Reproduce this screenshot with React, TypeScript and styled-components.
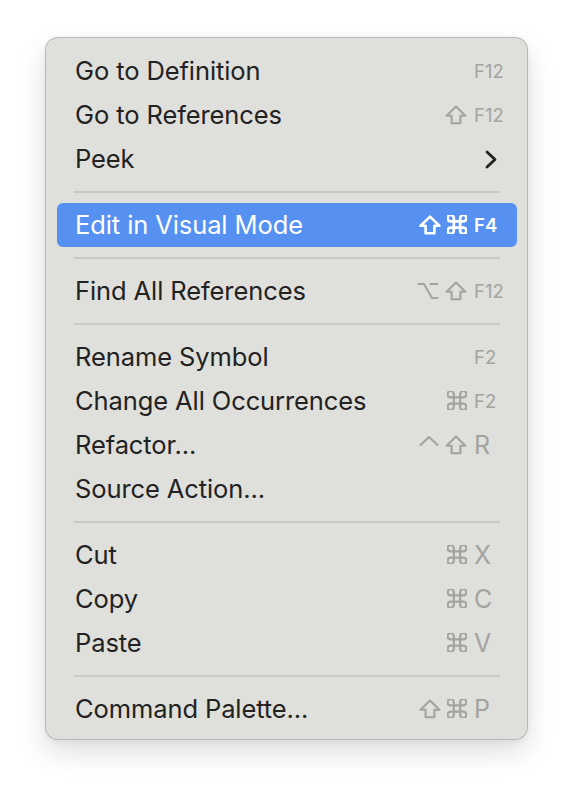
import React from "react";
import styled, { createGlobalStyle } from "styled-components";

const Global = createGlobalStyle`
  html, body { margin: 0; padding: 0; background: #ffffff; }
  body { font-family: Inter, "Noto Sans", "Liberation Sans", sans-serif; }
`;

const Page = styled.div`
  box-sizing: border-box;
  min-height: 794px;
  padding: 37px 0 0 45px;
`;

const Menu = styled.div`
  box-sizing: border-box;
  width: 483px;
  padding: 11px 10px 8px 11px;
  background: #dfdfdb;
  border: 1px solid rgba(0, 0, 0, 0.17);
  border-radius: 13px;
  box-shadow: 0 12px 28px rgba(0, 0, 0, 0.13), 0 2px 6px rgba(0, 0, 0, 0.06);
  display: flex;
  flex-direction: column;
`;

const Item = styled.div<{ $active?: boolean }>`
  height: 44px;
  display: flex;
  align-items: center;
  padding: 0 9px 0 18px;
  border-radius: 6px;
  background: ${(p) => (p.$active ? "#5691f2" : "transparent")};
  color: ${(p) => (p.$active ? "#ffffff" : "#222222")};
`;

const Label = styled.span`
  flex: 1;
  font-size: 25.5px;
  letter-spacing: -0.1px;
  line-height: 1;
`;

const Mods = styled.span<{ $active?: boolean }>`
  display: flex;
  align-items: center;
  gap: 6px;
  margin-right: 7px;
  color: ${(p) => (p.$active ? "#ffffff" : "#a3a3a0")};
`;

const Key = styled.span<{ $fn?: boolean; $active?: boolean }>`
  width: 34px;
  font-size: ${(p) => (p.$fn ? "18.5px" : "25px")};
  font-weight: ${(p) => (p.$active ? 600 : 400)};
  color: ${(p) => (p.$active ? "#ffffff" : "#a3a3a0")};
  line-height: 1;
`;

const Arrow = styled.span`
  width: 34px;
  display: flex;
  justify-content: flex-end;
  padding-right: 11px;
  box-sizing: border-box;
  color: #222222;
`;

const Separator = styled.div`
  height: 22px;
  display: flex;
  align-items: center;
  padding: 0 17px;
  &::after {
    content: "";
    flex: 1;
    height: 2px;
    background: #c9c9c5;
  }
`;

type Mod = "shift" | "cmd" | "opt" | "ctrl";

const ModIcon: React.FC<{ kind: Mod; bold?: boolean }> = ({ kind, bold }) => {
  const sw = bold ? 2.6 : 2.1;
  if (kind === "shift")
    return (
      <svg width="22" height="20" viewBox="0 0 22 20" fill="none" stroke="currentColor" strokeWidth={sw} strokeLinejoin="round">
        <path d="M11 1.6 L1.6 10.8 H6.6 V18.2 H15.4 V10.8 H20.4 Z" />
      </svg>
    );
  if (kind === "cmd")
    return (
      <svg width="20" height="19" viewBox="3 3 18 18" fill="none" stroke="currentColor" strokeWidth={sw} strokeLinecap="round" strokeLinejoin="round" style={{ marginTop: "-1px" }}>
        <path d="M15 6v12a3 3 0 1 0 3-3H6a3 3 0 1 0 3 3V6a3 3 0 1 0-3 3h12a3 3 0 1 0-3-3" />
      </svg>
    );
  if (kind === "opt")
    return (
      <svg width="22" height="18" viewBox="0 0 22 18" fill="none" stroke="currentColor" strokeWidth={sw} strokeLinejoin="round">
        <path d="M0.8 2 H7 L15 16 H21.2 M12.6 2 H21.2" />
      </svg>
    );
  return (
    <svg width="20" height="20" viewBox="0 0 20 20" fill="none" stroke="currentColor" strokeWidth={sw} strokeLinejoin="round" strokeLinecap="round">
      <path d="M1.5 10 L10 2 L18.5 10" />
    </svg>
  );
};

const Chevron = () => (
  <svg width="12" height="19" viewBox="0 0 12 19" fill="none" stroke="currentColor" strokeWidth="2.8" strokeLinecap="round" strokeLinejoin="round">
    <path d="M2 2 L10 9.5 L2 17" />
  </svg>
);

type Entry =
  | { sep: true }
  | { sep?: false; label: string; mods?: Mod[]; key?: string; fn?: boolean; submenu?: boolean; active?: boolean };

const entries: Entry[] = [
  { label: "Go to Definition", key: "F12", fn: true },
  { label: "Go to References", mods: ["shift"], key: "F12", fn: true },
  { label: "Peek", submenu: true },
  { sep: true },
  { label: "Edit in Visual Mode", mods: ["shift", "cmd"], key: "F4", fn: true, active: true },
  { sep: true },
  { label: "Find All References", mods: ["opt", "shift"], key: "F12", fn: true },
  { sep: true },
  { label: "Rename Symbol", key: "F2", fn: true },
  { label: "Change All Occurrences", mods: ["cmd"], key: "F2", fn: true },
  { label: "Refactor...", mods: ["ctrl", "shift"], key: "R" },
  { label: "Source Action..." },
  { sep: true },
  { label: "Cut", mods: ["cmd"], key: "X" },
  { label: "Copy", mods: ["cmd"], key: "C" },
  { label: "Paste", mods: ["cmd"], key: "V" },
  { sep: true },
  { label: "Command Palette...", mods: ["shift", "cmd"], key: "P" },
];

export default function App() {
  return (
    <>
      <Global />
      <Page>
        <Menu>
          {entries.map((e, i) => {
            if (e.sep) return <Separator key={i} />;
            return (
              <Item key={i} $active={e.active}>
                <Label>{e.label}</Label>
                {e.mods && (
                  <Mods $active={e.active}>
                    {e.mods.map((m, j) => (
                      <ModIcon key={j} kind={m} bold={e.active} />
                    ))}
                  </Mods>
                )}
                {e.key && (
                  <Key $fn={e.fn} $active={e.active}>
                    {e.key}
                  </Key>
                )}
                {e.submenu && (
                  <Arrow>
                    <Chevron />
                  </Arrow>
                )}
              </Item>
            );
          })}
        </Menu>
      </Page>
    </>
  );
}
